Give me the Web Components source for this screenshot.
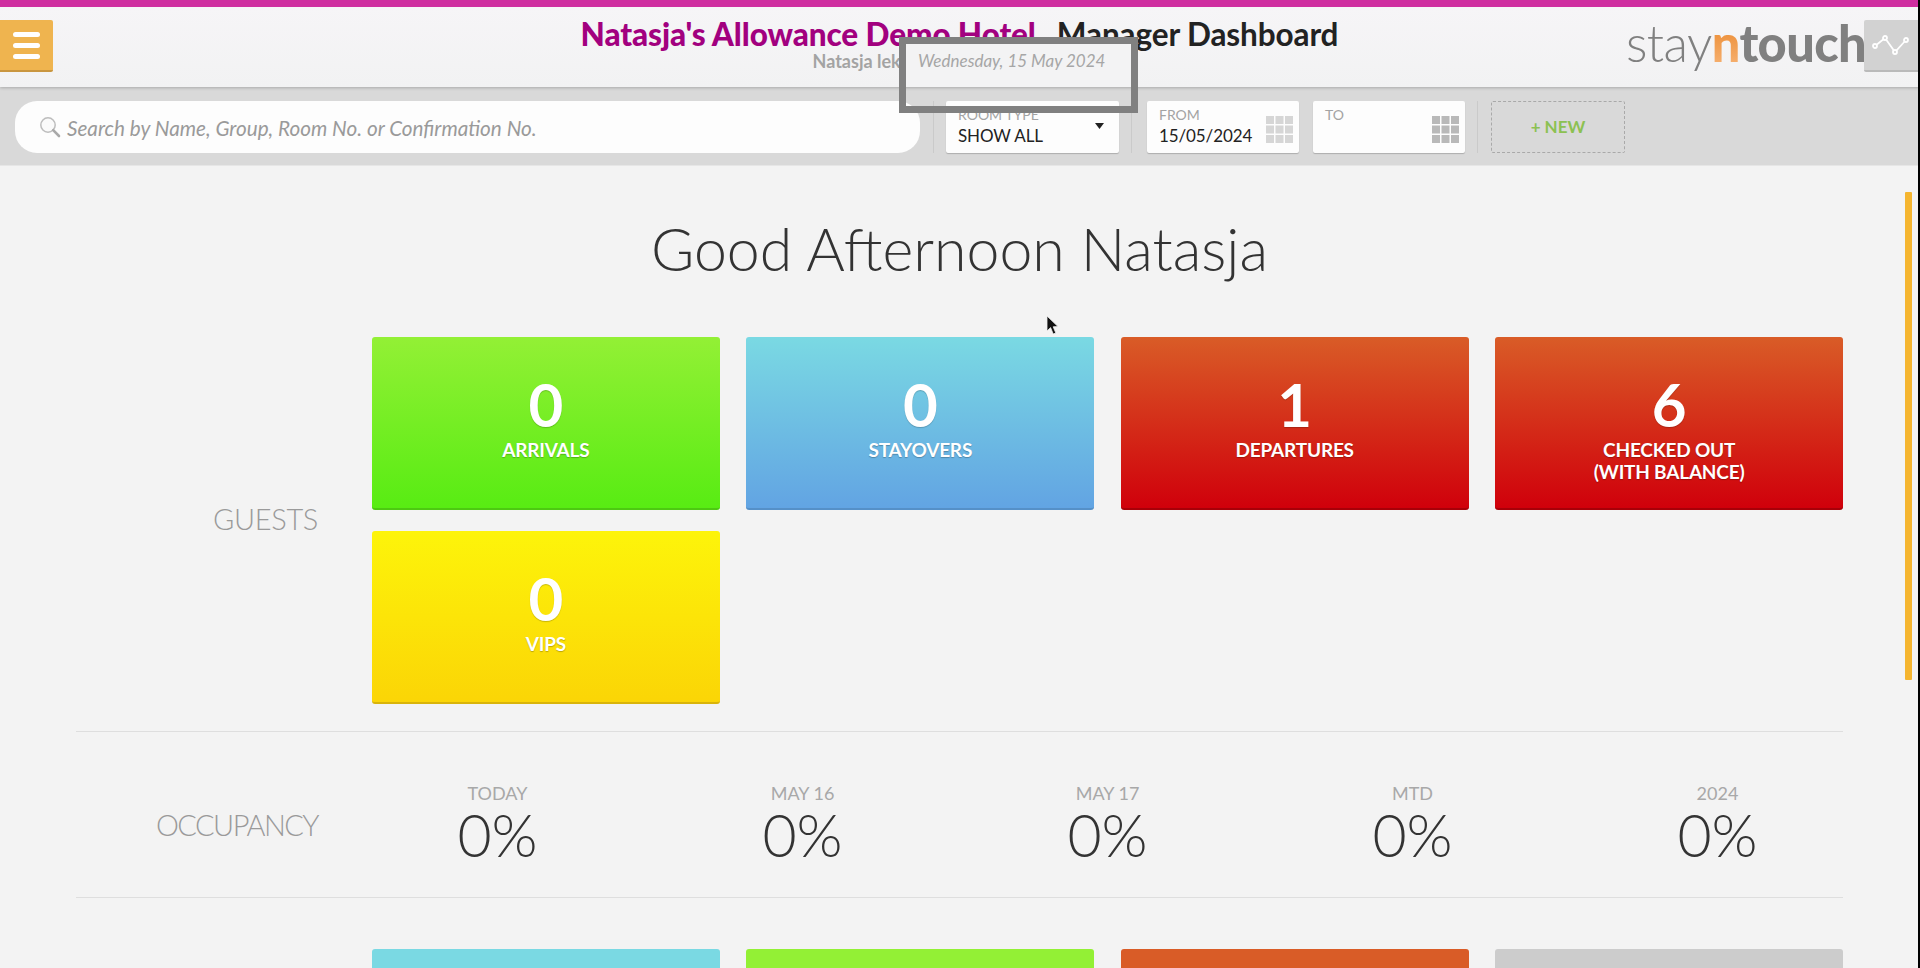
<!DOCTYPE html>
<html>
<head>
<meta charset="utf-8">
<title>Manager Dashboard</title>
<style>
  html, body { margin: 0; height: 100%; overflow: hidden; background: #f3f3f3; }
  body { font-family: Lato, "Noto Sans", sans-serif; color: #333; }
</style>
</head>
<body>
<dash-app></dash-app>

<script>
class DashHeader extends HTMLElement {
  constructor() {
    super();
    this.attachShadow({ mode: 'open' });
  }

  connectedCallback() {
    this.shadowRoot.innerHTML = `
      <style>
        :host { display: block; position: relative; z-index: 1; }
        .bar {
          height: 80px;
          border-top: 7px solid #cf2ea0;
          background: linear-gradient(180deg, #f6f5f7, #f2f2f3);
          box-shadow: 0 1px 3px rgba(0, 0, 0, 0.22);
          display: grid;
          grid-template-columns: 53px 1fr 292px;
        }
        .menu {
          margin-top: 13px;
          height: 50px;
          background: #efb44f;
          border-bottom: 2px solid #c9963f;
          border-radius: 0 2px 2px 0;
          display: flex;
          flex-direction: column;
          justify-content: center;
          align-items: center;
          gap: 6px;
        }
        .menu i { display: block; width: 27px; height: 5px; border-radius: 3px; background: #fff; }
        .middle { text-align: center; padding-left: 238px; padding-top: 9px; }
        .title { font-size: 31.5px; line-height: 36px; font-weight: 700; white-space: nowrap; color: #222; letter-spacing: -0.1px; }
        .title b { color: #a2007f; margin-right: 21px; }
        .sub { width: 294px; margin: -1px auto 0; text-align: left; font-size: 18px; line-height: 20px; font-weight: 700; color: #a3a3a3; white-space: nowrap; }
        .right { display: flex; align-items: flex-start; }
        .logo { width: 238px; font-size: 50.5px; line-height: 60px; margin: 6px 0 0 -2px; white-space: nowrap; letter-spacing: -0.6px; color: #808080; font-weight: 300; }
        .logo b { font-weight: 900; }
        .logo .n { background: linear-gradient(180deg, #e8801f, #f8b77c); -webkit-background-clip: text; background-clip: text; color: transparent; }
        .graph {
          margin-top: 13px;
          width: 54px;
          height: 50px;
          background: #d2d2d2;
          border-bottom: 2px solid #bababa;
          border-radius: 2px 0 0 2px;
          display: flex;
          align-items: center;
          justify-content: center;
        }
      </style>
      <div class="bar">
        <div class="menu"><i></i><i></i><i></i></div>
        <div class="middle">
          <div class="title"><b>Natasja's Allowance Demo Hotel</b>Manager Dashboard</div>
          <div class="sub">Natasja lek</div>
        </div>
        <div class="right">
          <div class="logo">stay<b class="n">n</b><b>touch</b></div>
          <div class="graph">
            <svg width="38" height="22" viewBox="0 0 38 22" fill="none" stroke="#fff" stroke-width="1.8">
              <path d="M3 12 L13 4 L23 18 L34 6"/>
              <circle cx="3" cy="12" r="2" fill="#d2d2d2"/>
              <circle cx="13" cy="4" r="2" fill="#d2d2d2"/>
              <circle cx="23" cy="18" r="2" fill="#d2d2d2"/>
              <circle cx="34" cy="6" r="2" fill="#d2d2d2"/>
            </svg>
          </div>
        </div>
      </div>
    `;
  }
}

class SearchField extends HTMLElement {
  constructor() {
    super();
    this.attachShadow({ mode: 'open' });
  }

  connectedCallback() {
    const text = this.getAttribute('placeholder') || '';
    this.shadowRoot.innerHTML = `
      <style>
        :host { display: block; }
        .box {
          height: 52px;
          background: #fdfdfd;
          border-radius: 22px;
          display: flex;
          align-items: center;
          padding-left: 24px;
          gap: 6px;
        }
        span { font-size: 20.7px; font-style: italic; color: #9a9a9a; white-space: nowrap; padding-top: 2px; }
        svg { display: block; flex: none; }
      </style>
      <div class="box">
        <svg width="22" height="22" viewBox="0 0 22 22" fill="none">
          <circle cx="9" cy="9" r="7.2" stroke="#bdbdbd" stroke-width="1.5" fill="#fafafa"/>
          <path d="M14.2 14.2 L20 20" stroke="#a9a9a9" stroke-width="2.6" stroke-linecap="round"/>
        </svg>
        <span>${text}</span>
      </div>
    `;
  }
}

class FilterField extends HTMLElement {
  constructor() {
    super();
    this.attachShadow({ mode: 'open' });
  }

  connectedCallback() {
    const label = this.getAttribute('label') || '';
    const value = this.getAttribute('value') || '';
    const kind = this.getAttribute('kind') || 'date';
    const gridColor = this.getAttribute('tone') || '#d6d6d6';
    let cells = '';
    for (let r = 0; r < 3; r++) {
      for (let c = 0; c < 3; c++) {
        cells += `<rect x="${c * 9.5}" y="${r * 9.5}" width="8" height="8" fill="${gridColor}"/>`;
      }
    }
    const extra = kind === 'select'
      ? `<svg class="arrow" width="9" height="6" viewBox="0 0 9 6"><path d="M0 0 H9 L4.5 6 Z" fill="#222"/></svg>`
      : `<svg class="cal" width="27" height="27" viewBox="0 0 27 27">${cells}</svg>`;
    this.shadowRoot.innerHTML = `
      <style>
        :host { display: block; }
        .box {
          position: relative;
          height: 52px;
          box-sizing: border-box;
          padding: 6px 12px 0;
          background: #fdfdfd;
          border-radius: 2px;
          box-shadow: 0 1px 1px rgba(0, 0, 0, 0.2);
        }
        .label { font-size: 14px; line-height: 16px; color: #a3a3a3; }
        .value { font-size: 17px; line-height: 22px; color: #222; white-space: nowrap; letter-spacing: -0.1px; margin-top: 2px; }
        .arrow { position: absolute; right: 15px; top: 22px; }
        .cal { position: absolute; right: 6px; top: 15px; }
      </style>
      <div class="box">
        <div class="label">${label}</div>
        <div class="value">${value}</div>
        ${extra}
      </div>
    `;
  }
}

class FilterBar extends HTMLElement {
  constructor() {
    super();
    this.attachShadow({ mode: 'open' });
  }

  connectedCallback() {
    this.shadowRoot.innerHTML = `
      <style>
        :host { display: block; }
        .bar {
          height: 79px;
          box-sizing: border-box;
          padding: 14px 0 0 15px;
          background: #d9d9d9;
          display: flex;
          align-items: flex-start;
          border-bottom: 1px solid #e6e6e6;
        }
        .sep { width: 1px; height: 52px; background: #cacaca; flex: none; margin: 0 12px; }
        .sep.wide { margin-right: 15px; }
        search-field { width: 905px; margin-right: 1px; }
        .type { width: 173px; }
        .date { width: 152px; }
        .to { margin-left: 14px; }
        .new {
          width: 134px;
          height: 52px;
          box-sizing: border-box;
          border: 1px dashed #a9a9a9;
          border-radius: 2px;
          margin-left: 1px;
          display: flex;
          align-items: center;
          justify-content: center;
          font-size: 17px;
          font-weight: 700;
          color: #8cc152;
          padding-bottom: 2px;
        }
      </style>
      <div class="bar">
        <search-field placeholder="Search by Name, Group, Room No. or Confirmation No."></search-field>
        <div class="sep"></div>
        <filter-field class="type" kind="select" label="ROOM TYPE" value="SHOW ALL"></filter-field>
        <div class="sep wide"></div>
        <filter-field class="date" label="FROM" value="15/05/2024"></filter-field>
        <filter-field class="date to" label="TO" value="" tone="#b9b9b9"></filter-field>
        <div class="sep"></div>
        <div class="new">+ NEW</div>
      </div>
    `;
  }
}

class TileCard extends HTMLElement {
  constructor() {
    super();
    this.attachShadow({ mode: 'open' });
  }

  connectedCallback() {
    const from = this.getAttribute('from');
    const to = this.getAttribute('to') || from;
    const edge = this.getAttribute('edge') || to;
    const num = this.getAttribute('num');
    this.shadowRoot.innerHTML = `
      <style>
        :host { display: block; }
        .card {
          height: 173px;
          box-sizing: border-box;
          padding-top: 32px;
          border-radius: 3px;
          border-bottom: 2px solid ${edge};
          background: linear-gradient(180deg, ${from}, ${to});
          color: #fff;
          text-align: center;
        }
        .num { font-size: 60px; line-height: 70px; font-weight: 700; text-shadow: 0 1px 1px rgba(0, 0, 0, 0.2); }
        .text { font-size: 19px; line-height: 22px; font-weight: 700; text-shadow: 0 1px 1px rgba(0, 0, 0, 0.25); letter-spacing: -0.2px; }
      </style>
      <div class="card">
        ${num === null ? '' : `<div class="num">${num}</div>`}
        <div class="text"><slot></slot></div>
      </div>
    `;
  }
}

class DashSection extends HTMLElement {
  constructor() {
    super();
    this.attachShadow({ mode: 'open' });
  }

  connectedCallback() {
    const label = this.getAttribute('label') || '';
    this.shadowRoot.innerHTML = `
      <style>
        :host { display: block; }
        .row { display: grid; grid-template-columns: 242px 1fr; column-gap: 54px; align-items: center; }
        .label {
          text-align: right;
          font-size: 29px;
          font-weight: 300;
          color: #9a9a9a;
          white-space: nowrap;
          letter-spacing: var(--label-spacing, -0.3px);
          padding-bottom: var(--label-lift, 0);
        }
      </style>
      <div class="row">
        <div class="label">${label}</div>
        <div><slot></slot></div>
      </div>
    `;
  }
}

class StatItem extends HTMLElement {
  constructor() {
    super();
    this.attachShadow({ mode: 'open' });
  }

  connectedCallback() {
    this.shadowRoot.innerHTML = `
      <style>
        :host { display: block; text-align: center; }
        .head { font-size: 18px; line-height: 24px; color: #a8a8a8; }
        .val { font-size: 59px; line-height: 60px; font-weight: 300; color: #333; }
      </style>
      <div class="head">${this.getAttribute('head')}</div>
      <div class="val">${this.getAttribute('val')}</div>
    `;
  }
}

class DatePopup extends HTMLElement {
  constructor() {
    super();
    this.attachShadow({ mode: 'open' });
  }

  connectedCallback() {
    this.shadowRoot.innerHTML = `
      <style>
        :host {
          display: block;
          position: absolute;
          z-index: 2;
          left: 899px;
          top: 37px;
          width: 239px;
          height: 76px;
          box-sizing: border-box;
          border: 7px solid #808080;
        }
        .strip {
          height: 43px;
          box-sizing: border-box;
          padding: 7px 0 0 12px;
          background: #f3f3f4;
          font-size: 17px;
          line-height: 20px;
          font-style: italic;
          color: #a6a6a6;
          white-space: nowrap;
        }
      </style>
      <div class="strip">Wednesday, 15 May 2024</div>
    `;
  }
}

class DashApp extends HTMLElement {
  constructor() {
    super();
    this.attachShadow({ mode: 'open' });
  }

  connectedCallback() {
    this.shadowRoot.innerHTML = `
      <style>
        :host { display: block; position: relative; height: 968px; overflow: hidden; }
        .main { padding: 0 77px 0 76px; }
        h1 {
          margin: 0;
          height: 171px;
          box-sizing: border-box;
          padding-top: 47px;
          text-align: center;
          font-size: 59px;
          line-height: 72px;
          font-weight: 300;
          color: #333;
        }
        .cards { display: grid; grid-template-columns: repeat(4, 1fr); gap: 21px 26.7px; }
        .guests { padding-bottom: 27px; border-bottom: 1px solid #dedede; --label-lift: 5px; }
        .occupancy {
          height: 166px;
          box-sizing: border-box;
          padding: 21px 0 2px;
          display: flex;
          flex-direction: column;
          justify-content: center;
          border-bottom: 1px solid #dedede;
          --label-spacing: -1.55px;
        }
        .stats { display: grid; grid-template-columns: repeat(5, 1fr); margin: 0 -27px; padding-bottom: 2px; }
        .next { margin-top: 51px; padding-left: 296px; }
        .scroll { position: absolute; right: 8px; top: 192px; width: 7px; height: 488px; background: #f5b52f; border-radius: 1px; }
        .cursor { position: absolute; left: 1046px; top: 315px; }
        .edge { position: absolute; z-index: 3; right: 0; top: 0; bottom: 0; width: 2px; background: #000; }
      </style>
      <dash-header></dash-header>
      <filter-bar></filter-bar>
      <div class="main">
        <h1>Good Afternoon Natasja</h1>
        <dash-section class="guests" label="GUESTS">
          <div class="cards">
            <tile-card from="#93f035" to="#58ec13" edge="#4dc912" num="0">ARRIVALS</tile-card>
            <tile-card from="#7ad9e3" to="#62a4e3" edge="#5590c8" num="0">STAYOVERS</tile-card>
            <tile-card from="#d95c27" to="#d0000b" edge="#a80008" num="1">DEPARTURES</tile-card>
            <tile-card from="#d95c27" to="#d0000b" edge="#a80008" num="6">CHECKED OUT<br>(WITH BALANCE)</tile-card>
            <tile-card from="#fdf40a" to="#fbd506" edge="#d9b40a" num="0">VIPS</tile-card>
          </div>
        </dash-section>
        <dash-section class="occupancy" label="OCCUPANCY">
          <div class="stats">
            <stat-item head="TODAY" val="0%"></stat-item>
            <stat-item head="MAY 16" val="0%"></stat-item>
            <stat-item head="MAY 17" val="0%"></stat-item>
            <stat-item head="MTD" val="0%"></stat-item>
            <stat-item head="2024" val="0%"></stat-item>
          </div>
        </dash-section>
        <div class="next cards">
          <tile-card from="#7ad9e3"></tile-card>
          <tile-card from="#93f035"></tile-card>
          <tile-card from="#d95c27"></tile-card>
          <tile-card from="#cccccc"></tile-card>
        </div>
      </div>
      <date-popup></date-popup>
      <div class="scroll"></div>
      <div class="edge"></div>
      <svg class="cursor" width="14" height="21" viewBox="0 0 14 21"><path d="M1 1 L1 16 L4.6 12.6 L7.2 19 L9.8 18 L7.2 11.8 L12 11.6 Z" fill="#111" stroke="#eee" stroke-width="0.8"/></svg>
    `;
  }
}

customElements.define('dash-header', DashHeader);
customElements.define('search-field', SearchField);
customElements.define('filter-field', FilterField);
customElements.define('filter-bar', FilterBar);
customElements.define('tile-card', TileCard);
customElements.define('dash-section', DashSection);
customElements.define('stat-item', StatItem);
customElements.define('date-popup', DatePopup);
customElements.define('dash-app', DashApp);
</script>
</body>
</html>
